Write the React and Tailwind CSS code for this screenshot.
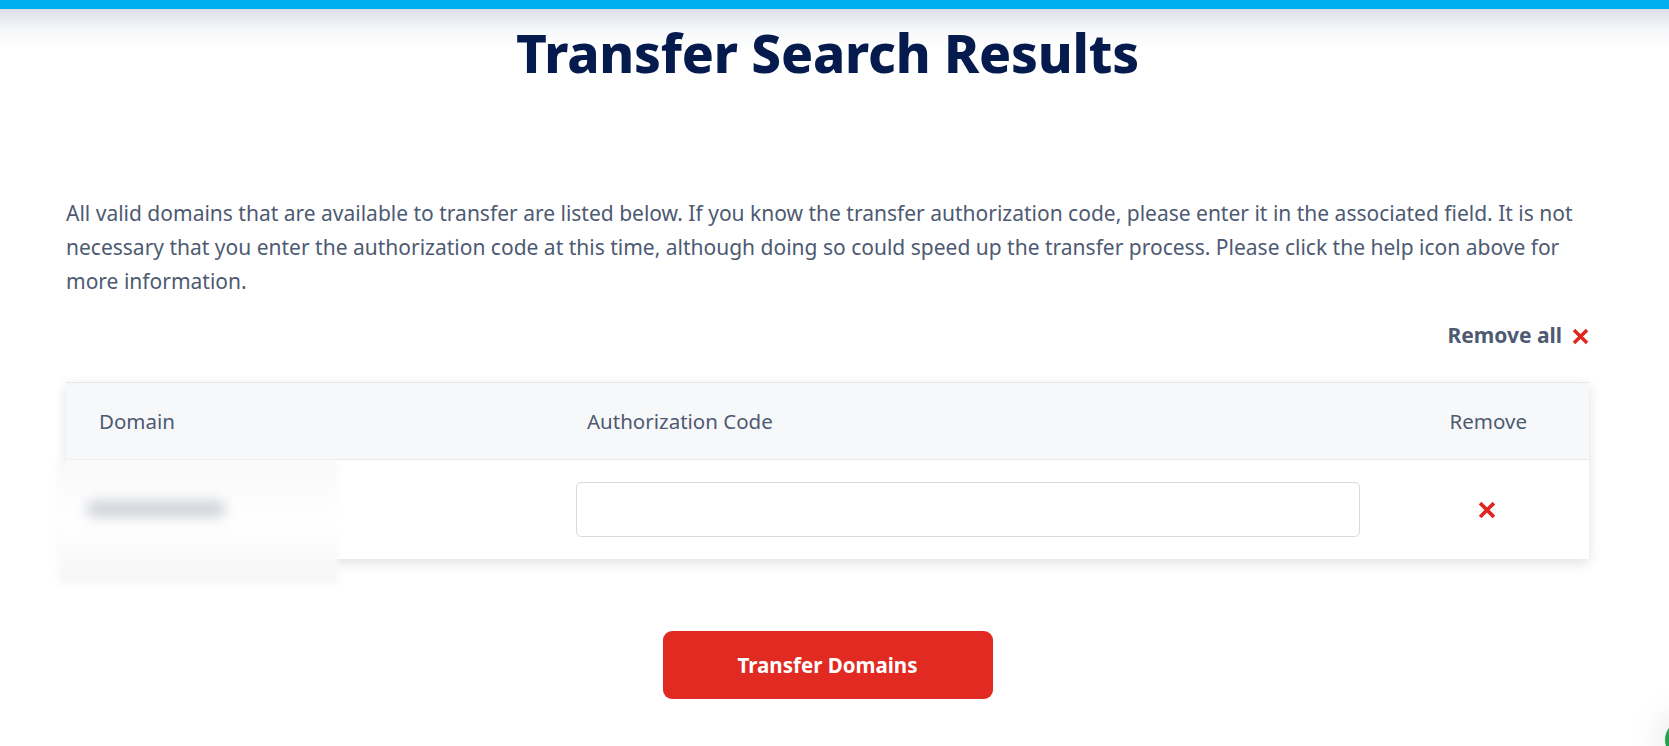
function RedX({ className }) {
  return (
    <svg viewBox="0 0 16 16" className={className} fill="none" stroke="#e0261e" strokeWidth="3.2" strokeLinecap="square">
      <path d="M3 3l10 10M13 3L3 13" />
    </svg>
  );
}

export default function App() {
  return (
    <div className="relative min-h-[746px] bg-white overflow-hidden font-['Noto_Sans',sans-serif]">
      <div className="h-[9px] bg-[#00aeef]" />
      <div className="bg-gradient-to-b from-[#dde0e8] via-[#f6f7f9] to-white h-[40px] -mb-[40px]" />

      <div className="pl-[66px] pr-[80px]">
        <h1 className="relative text-center text-[53px] font-extrabold leading-[53px] text-[#061b4d] pt-[17px] tracking-[-0.2px]">
          Transfer Search Results
        </h1>

        <p className="pt-[117px] text-[21px] leading-[34px] text-[#4d5a72]">
          All valid domains that are available to transfer are listed below. If you know the transfer authorization code, please enter it in the associated field. It is not necessary that you enter the authorization code at this time, although doing so could speed up the transfer process. Please click the help icon above for more information.
        </p>

        <div className="flex justify-end items-center gap-[10px] mt-[23px] h-[30px]">
          <span className="text-[21px] font-bold text-[#4d5a72]">Remove all</span>
          <RedX className="w-[17px] h-[17px]" />
        </div>

        <div className="mt-[31px] border-t border-[#e6e8ec] shadow-[0_4px_12px_rgba(0,0,0,0.12)]">
          <div className="flex items-center h-[77px] bg-[#f7f8fa] border-b border-[#e6e8ec] text-[20.5px] text-[#4d5a72]">
            <div className="w-[521px] pl-[33px]">Domain</div>
            <div className="flex-1">Authorization Code</div>
            <div className="w-[200px] pr-[62px] text-right">Remove</div>
          </div>
          <div className="flex items-center h-[99px] bg-white">
            <div className="w-[510px] self-stretch relative">
              <div className="absolute -left-[8px] top-0 w-[280px] h-[123px] bg-gradient-to-b from-[#f8f8f9] via-white to-[#f6f6f7] blur-[3px]" />
              <div className="absolute left-[20px] top-[40px] w-[140px] h-[18px] rounded-full bg-[#d3d6dc] blur-[6px]" />
            </div>
            <div className="w-[784px]">
              <input className="w-full h-[55px] rounded-[5px] border border-[#d9dbe0] bg-white outline-none px-3" />
            </div>
            <div className="flex-1 flex justify-center">
              <RedX className="w-[18px] h-[18px] ml-[24px]" />
            </div>
          </div>
        </div>

        <div className="flex justify-center mt-[72px]">
          <button className="w-[330px] h-[68px] rounded-[9px] bg-[#e02a22] text-white text-[20.5px] font-bold">
            Transfer Domains
          </button>
        </div>
      </div>

      <div className="absolute -right-[56px] -bottom-[14px] w-[60px] h-[40px] rounded-full bg-[#22a24a] shadow-[0_0_40px_rgba(0,0,0,0.15)]" />
    </div>
  );
}
